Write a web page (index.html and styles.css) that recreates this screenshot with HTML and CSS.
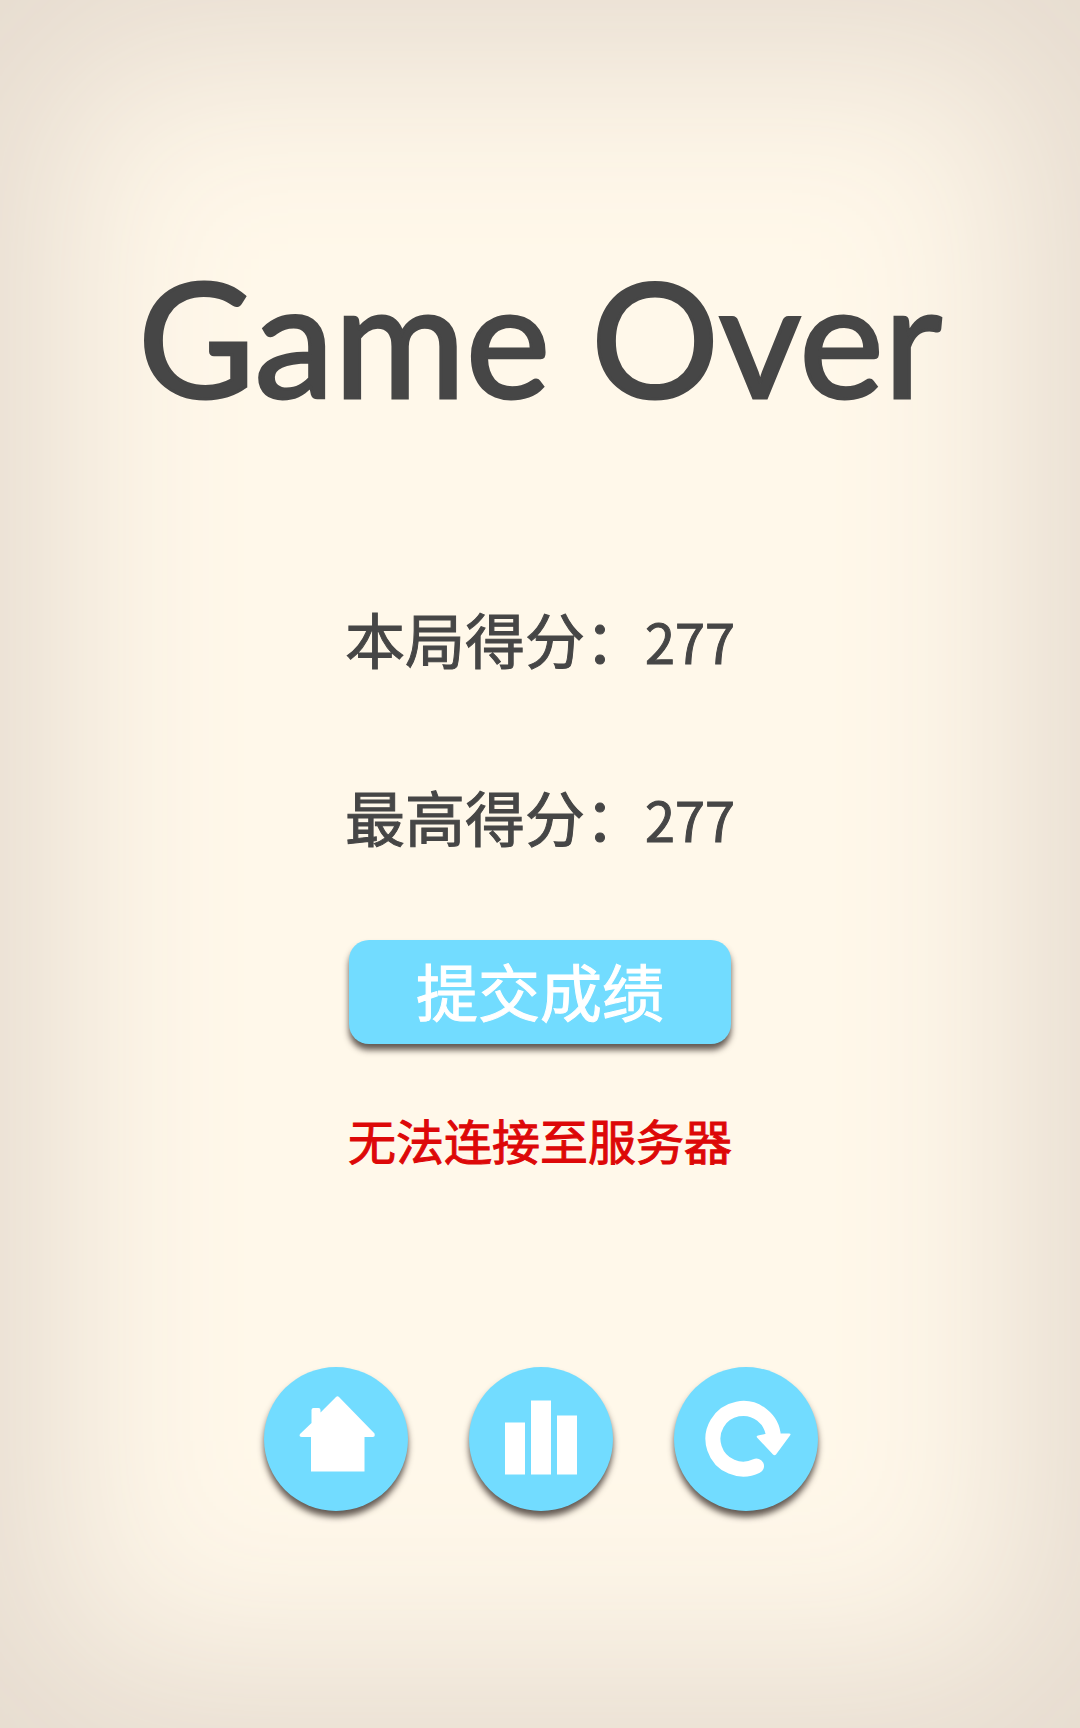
FILE: index.html
```html
<!DOCTYPE html>
<html lang="zh-CN">
<head>
    <meta charset="UTF-8">
    <meta name="viewport" content="width=device-width, initial-scale=1.0">
    <title>Game Over</title>
    <link rel="stylesheet" href="styles.css">
</head>
<body>

<main class="game-over">
    <h1 class="title">Game Over</h1>

    <div class="scores">
        <p class="score">本局得分：<span class="points">277</span></p>
        <p class="score">最高得分：<span class="points">277</span></p>
    </div>

    <button type="button" class="submit">提交成绩</button>
    <p class="error">无法连接至服务器</p>

    <div class="menu">
        <button type="button" class="round" aria-label="主页">
            <svg viewBox="0 0 144 144">
                <path d="M47.5 56V43q0-2 2-2h5q2 0 2 2v2.500L72 30q1.500-1.500 3 0l35.500 36.500q1 3.500-2 3.500h-8v34.500h-53.500V70h-9q-3.500 0-2-3z"/>
            </svg>
        </button>
        <button type="button" class="round" aria-label="排行榜">
            <svg viewBox="0 0 144 144">
                <path d="M36 55.500h20v52h-20zM62 33.500h20v74h-20zM88 48.500h20v59h-20z"/>
            </svg>
        </button>
        <button type="button" class="round" aria-label="重新开始">
            <svg viewBox="0 0 144 144">
                <path class="arc" d="M99.500 70A30.300 30.300 0 1 0 82.500 99"/>
                <path d="M84 68.500l7-1.500 17-0.500h7q2.500 0 1 2L102 87.500q-1.500 1.500-3 0L83 70.500q-1-1.500 1-2z"/>
            </svg>
        </button>
    </div>
</main>

</body>
</html>
```

FILE: styles.css
```css
* {
    box-sizing: border-box;
}
body {
    margin: 0;
    font-family: "Noto Sans CJK SC", sans-serif;
    color: #464646;
    background-color: #fff8ea;
}
.game-over {
    min-height: 100vh;
    padding: 256px 20px 60px;
    display: flex;
    flex-direction: column;
    align-items: center;
    box-shadow: inset 0 0 190px 60px #e6dbcf;
}
.title {
    margin: 0;
    font-family: Lato, sans-serif;
    font-size: 160px;
    font-weight: 400;
    line-height: 160px;
    white-space: nowrap;
    -webkit-text-stroke: 3px #464646;
}
.scores {
    margin-top: 182px;
}
.score {
    margin: 0 0 98px;
    font-size: 60px;
    line-height: 80px;
    -webkit-text-stroke: 1px #464646;
}
.score:last-child {
    margin-bottom: 84px;
}
.points {
    font-size: 54px;
    line-height: 54px;
}
button {
    padding: 0;
    border: none;
    color: #fff;
    background-color: #72dcff;
    box-shadow: 0 6px 6px rgba(60, 50, 45, 0.8);
    cursor: pointer;
}
.submit {
    width: 382px;
    height: 104px;
    padding-bottom: 4px;
    border-radius: 20px;
    font-family: inherit;
    font-size: 62px;
    line-height: 100px;
    -webkit-text-stroke: 1px #fff;
}
.error {
    margin: 60px 0 0;
    font-size: 48px;
    line-height: 70px;
    color: #dd0808;
    -webkit-text-stroke: 1px #dd0808;
}
.menu {
    margin-top: 193px;
    padding-left: 2px;
    display: flex;
    gap: 61px;
}
.round {
    width: 144px;
    height: 144px;
    border-radius: 50%;
}
.round svg {
    display: block;
    fill: #fff;
}
.round .arc {
    fill: none;
    stroke: #fff;
    stroke-width: 15px;
    stroke-linecap: round;
}
```
